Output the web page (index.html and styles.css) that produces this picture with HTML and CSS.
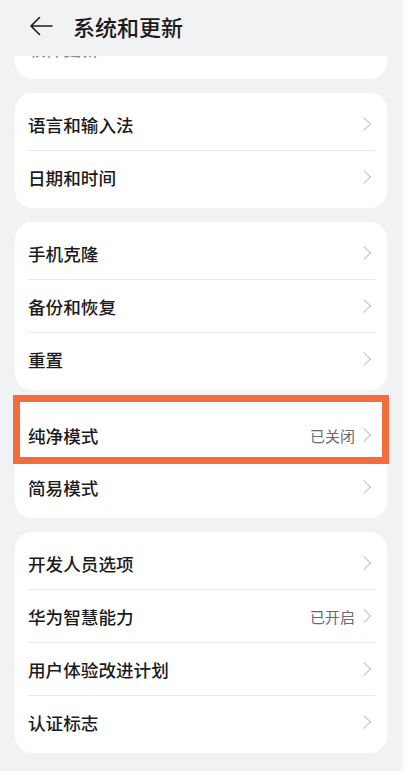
FILE: index.html
```html
<!DOCTYPE html>
<html lang="zh-CN">
<head>
<meta charset="utf-8">
<title>系统和更新</title>
<link rel="stylesheet" href="styles.css">
</head>
<body>
<div class="page">
  <header class="header">
    <svg class="back" width="24" height="20" viewBox="0 0 24 20" aria-hidden="true">
      <path d="M23 10 H2 M10.5 1.5 L2 10 L10.5 18.5" fill="none" stroke="#1c1c1c" stroke-width="1.6" stroke-linecap="round" stroke-linejoin="round"/>
    </svg>
    <h1 class="title">系统和更新</h1>
  </header>
  <main class="content">
    <section class="card card-first">
      <div class="row"><span class="label faded">软件更新</span><span class="chev"></span></div>
    </section>
    <section class="card">
      <div class="row"><span class="label">语言和输入法</span><span class="chev"></span></div>
      <div class="divider"></div>
      <div class="row"><span class="label">日期和时间</span><span class="chev"></span></div>
    </section>
    <section class="card">
      <div class="row"><span class="label">手机克隆</span><span class="chev"></span></div>
      <div class="divider"></div>
      <div class="row"><span class="label">备份和恢复</span><span class="chev"></span></div>
      <div class="divider"></div>
      <div class="row"><span class="label">重置</span><span class="chev"></span></div>
    </section>
    <section class="card">
      <div class="row"><span class="label">纯净模式</span><span class="value">已关闭</span><span class="chev"></span></div>
      <div class="row"><span class="label">简易模式</span><span class="chev"></span></div>
    </section>
    <section class="card">
      <div class="row"><span class="label">开发人员选项</span><span class="chev"></span></div>
      <div class="divider"></div>
      <div class="row"><span class="label">华为智慧能力</span><span class="value">已开启</span><span class="chev"></span></div>
      <div class="divider"></div>
      <div class="row"><span class="label">用户体验改进计划</span><span class="chev"></span></div>
      <div class="divider"></div>
      <div class="row"><span class="label">认证标志</span><span class="chev"></span></div>
    </section>
  </main>
  <div class="highlight"></div>
</div>
</body>
</html>
```

FILE: styles.css
```css
* { box-sizing: border-box; }
html, body {
  margin: 0;
  padding: 0;
  background: #f1f2f4;
}
body {
  font-family: "Noto Sans CJK SC", "Noto Sans", sans-serif;
  color: #1b1b1b;
}
.page {
  position: relative;
  width: 405px;
  height: 771px;
  overflow: hidden;
  background: #f1f2f4;
  border-right: 3px solid #fafafa;
}
.header {
  height: 56px;
  display: flex;
  align-items: center;
  padding-left: 29px;
  padding-bottom: 4px;
  background: #f1f2f4;
  position: relative;
  z-index: 2;
}
.back { display: block; }
.title {
  margin: 0 0 0 20px;
  font-size: 22px;
  font-weight: 500;
  line-height: 1;
  color: #1b1b1b;
}
.content {
  height: 715px;
  overflow: hidden;
  padding: 0 15px;
  display: flex;
  flex-direction: column;
  gap: 14px;
}
.card {
  background: #ffffff;
  border-radius: 17px;
  padding: 5px 0;
  flex: none;
}
.card-first {
  margin-top: -39px;
}
.row {
  height: 52px;
  display: flex;
  align-items: center;
  padding: 0 17px 0 13px;
}
.label {
  flex: 1;
  font-size: 17.6px;
  font-weight: 500;
  color: #1b1b1b;
}
.label.faded {
  color: #8c8c8c;
}
.value {
  font-size: 15px;
  color: #6a6a6a;
  margin-right: 7px;
}
.chev {
  width: 8px;
  height: 14px;
  position: relative;
}
.chev::before {
  content: "";
  position: absolute;
  left: -3px;
  top: 2px;
  width: 9px;
  height: 9px;
  border-top: 1.5px solid #c2c2c2;
  border-right: 1.5px solid #c2c2c2;
  transform: rotate(45deg);
}
.divider {
  height: 1px;
  background: #e9e9ea;
  margin: 0 12px 0 13px;
}
.highlight {
  position: absolute;
  left: 13px;
  top: 395px;
  width: 376px;
  height: 69px;
  border: 7px solid #f36d3c;
  box-shadow: inset 0 0 0 6px #ffffff;
  z-index: 3;
}
```
